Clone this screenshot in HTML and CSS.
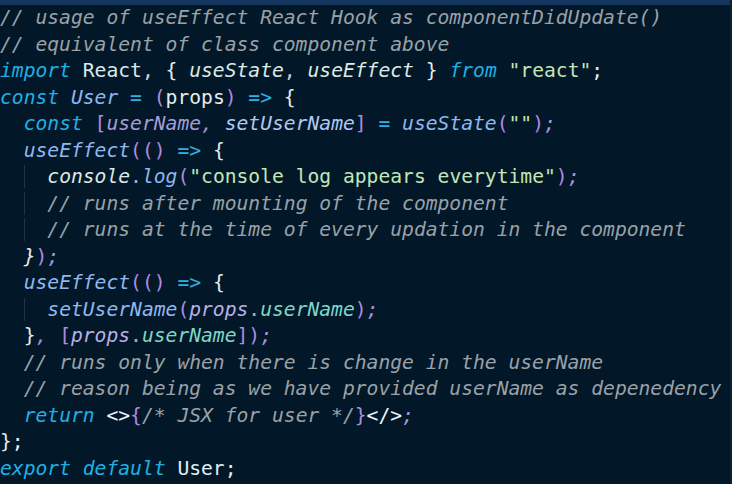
FILE: index.html
```html
<!DOCTYPE html>
<html lang="en">
<head>
<meta charset="utf-8">
<title>useEffect as componentDidUpdate</title>
<link rel="stylesheet" href="styles.css">
</head>
<body>
<div class="editor">
  <div class="topbar"></div>
  <pre class="code"><div class="line"><span class="cm">// usage of useEffect React Hook as componentDidUpdate()</span></div><div class="line"><span class="cm">// equivalent of class component above</span></div><div class="line"><span class="kw">import</span> <span class="id">React</span><span class="pl">, </span><span class="br">{</span> <span class="idi">useState</span><span class="pl">, </span><span class="idi">useEffect</span> <span class="br">}</span> <span class="kw">from</span> <span class="str">"react"</span><span class="br">;</span></div><div class="line"><span class="kw">const</span> <span class="fn">User</span> <span class="op">=</span> <span class="pa">(</span><span class="br">props</span><span class="pa">)</span> <span class="op">=&gt;</span> <span class="br">{</span></div><div class="line">  <span class="kw">const</span> <span class="pa">[</span><span class="var">userName</span><span class="pc">, </span><span class="fn2">setUserName</span><span class="pa">]</span> <span class="op">=</span> <span class="fn">useState</span><span class="pa">(</span><span class="str">""</span><span class="pa">)</span><span class="sc">;</span></div><div class="line">  <span class="fn">useEffect</span><span class="pa">(()</span> <span class="op">=&gt;</span> <span class="br">{</span></div><div class="line">  <span class="guide">  </span><span class="idi">console</span><span class="dot">.</span><span class="fn">log</span><span class="pa">(</span><span class="str">"console log appears everytime"</span><span class="pa">)</span><span class="sc">;</span></div><div class="line">  <span class="guide">  </span><span class="cm">// runs after mounting of the component</span></div><div class="line">  <span class="guide">  </span><span class="cm">// runs at the time of every updation in the component</span></div><div class="line">  <span class="bri">}</span><span class="pa">)</span><span class="sc">;</span></div><div class="line">  <span class="fn">useEffect</span><span class="pa">(()</span> <span class="op">=&gt;</span> <span class="br">{</span></div><div class="line">  <span class="guide">  </span><span class="fn">setUserName</span><span class="pa">(</span><span class="var2">props</span><span class="dot">.</span><span class="prop">userName</span><span class="pa">)</span><span class="sc">;</span></div><div class="line">  <span class="br">}</span><span class="pc">, </span><span class="pa">[</span><span class="var2">props</span><span class="dot">.</span><span class="prop">userName</span><span class="pa">])</span><span class="sc">;</span></div><div class="line">  <span class="cm">// runs only when there is change in the userName</span></div><div class="line">  <span class="cm">// reason being as we have provided userName as depenedency</span></div><div class="line">  <span class="kw">return</span> <span class="tag">&lt;&gt;</span><span class="pa">{</span><span class="cm">/* JSX for user */</span><span class="pa">}</span><span class="tag">&lt;/&gt;</span><span class="sc">;</span></div><div class="line"><span class="br">}</span><span class="br">;</span></div><div class="line"><span class="kw">export</span> <span class="kw">default</span> <span class="br">User</span><span class="br">;</span></div></pre>
</div>
</body>
</html>
```

FILE: styles.css
```css
html, body {
  margin: 0;
  padding: 0;
  background: #021829;
}

.editor {
  width: 732px;
  height: 484px;
  background: #021829;
  overflow: hidden;
  box-sizing: border-box;
  border-right: 2px solid #0a2237;
}

.topbar {
  height: 5px;
  background: #15375f;
}

.code {
  margin: 0;
  padding: 0;
  font-family: "DejaVu Sans Mono", monospace;
  font-size: 19.65px;
  line-height: 26.5px;
  color: #dfe9ee;
  white-space: pre;
}

.line {
  height: 26.5px;
}

.guide {
  box-shadow: inset 1px 0 0 #1e3448;
}

.cm { color: #9aa1a7; font-style: italic; }
.kw { color: #1fb0e4; font-style: italic; }
.id { color: #d9e8ea; }
.idi { color: #dde9e4; font-style: italic; }
.pl { color: #c9d6dc; }
.br { color: #e4ecf0; }
.bri { color: #e4ecf0; font-style: italic; }
.str { color: #c2e6b6; }
.op { color: #2fb0e0; }
.pa { color: #b08be0; }
.pc { color: #9d93c8; font-style: italic; }
.sc { color: #a795d8; font-style: italic; }
.fn { color: #90b7ef; font-style: italic; }
.fn2 { color: #b3c6ef; font-style: italic; }
.var { color: #a69cd4; font-style: italic; }
.var2 { color: #b9b0e6; font-style: italic; }
.prop { color: #7fd6c6; font-style: italic; }
.dot { color: #aab4bc; }
.tag { color: #f0f4f6; }
```
